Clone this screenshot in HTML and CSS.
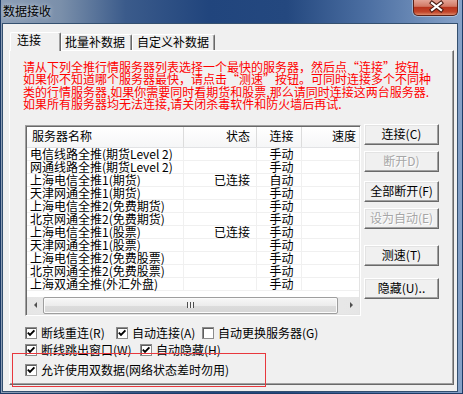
FILE: index.html
```html
<!DOCTYPE html>
<html lang="zh-CN">
<head>
  <meta charset="UTF-8">
  <meta name="viewport" content="width=device-width, initial-scale=1.0">
  <title>数据接收</title>
  <link rel="stylesheet" href="styles.css">
</head>
<body>
  <div class="window">
    <div class="titlebar">
      <span class="title">数据接收</span>
      <div class="close-btn">
        <svg width="45" height="15" viewBox="0 0 45 15">
          <path d="M18 3 L27 10 M27 3 L18 10" stroke="#4a1b12" stroke-width="4.2" stroke-linecap="square"/>
          <path d="M18 3 L27 10 M27 3 L18 10" stroke="#fff" stroke-width="2.2" stroke-linecap="square"/>
        </svg>
      </div>
    </div>

    <div class="client">
      <div class="tabs">
        <div class="tab active">连接</div>
        <div class="tab tab-batch">批量补数据</div>
        <div class="tab tab-custom">自定义补数据</div>
      </div>

      <div class="panel">
        <p class="notice">
          请从下列全推行情服务器列表选择一个最快的服务器，然后点“连接”按钮，<br>
          如果你不知道哪个服务器最快，请点击“测速”按钮。可同时连接多个不同种<br>
          类的行情服务器,如果你需要同时看期货和股票,那么请同时连接这两台服务器.<br>
          如果所有服务器均无法连接,请关闭杀毒软件和防火墙后再试.
        </p>

        <div class="main">
          <div class="listview">
            <div class="lv-head">
              <span class="col-name">服务器名称</span>
              <span class="col-state">状态</span>
              <span class="col-conn">连接</span>
              <span class="col-speed">速度</span>
            </div>
            <div class="lv-body" id="serverList"></div>
            <div class="lv-fill"></div>
            <div class="hscroll">
              <span class="sb-btn"><i class="arrow-left"></i></span>
              <span class="sb-thumb"><i class="grip"></i></span>
              <span class="sb-track"></span>
              <span class="sb-btn"><i class="arrow-right"></i></span>
            </div>
          </div>

          <div class="side-buttons">
            <button class="btn">连接(C)</button>
            <button class="btn disabled gap-6">断开D)</button>
            <button class="btn gap-9">全部断开(F)</button>
            <button class="btn disabled gap-6">设为自动(E)</button>
            <button class="btn gap-16">测速(T)</button>
            <button class="btn gap-12">隐藏(U)..</button>
          </div>
        </div>

        <div class="options">
          <div class="opt-row">
            <label class="opt opt-reconnect"><span class="cb checked"></span>断线重连(R)</label>
            <label class="opt opt-autoconn"><span class="cb checked"></span>自动连接(A)</label>
            <label class="opt"><span class="cb"></span>自动更换服务器(G)</label>
          </div>
          <div class="opt-row row-2">
            <label class="opt opt-popup"><span class="cb checked"></span>断线跳出窗口(W)</label>
            <label class="opt"><span class="cb checked"></span>自动隐藏(H)</label>
          </div>
          <div class="opt-row row-3">
            <label class="opt"><span class="cb checked"></span>允许使用双数据(网络状态差时勿用)</label>
          </div>
        </div>
      </div>

      <div class="highlight"></div>
    </div>
  </div>

  <script>
    const servers = [
      ['电信线路全推(期货Level 2)', '', '手动'],
      ['网通线路全推(期货Level 2)', '', '手动'],
      ['上海电信全推1(期货)', '已连接', '自动'],
      ['天津网通全推1(期货)', '', '手动'],
      ['上海电信全推2(免费期货)', '', '手动'],
      ['北京网通全推2(免费期货)', '', '手动'],
      ['上海电信全推1(股票)', '已连接', '手动'],
      ['天津网通全推1(股票)', '', '手动'],
      ['上海电信全推2(免费股票)', '', '手动'],
      ['北京网通全推2(免费股票)', '', '手动'],
      ['上海双通全推(外汇外盘)', '', '手动']
    ];

    const check = '<svg viewBox="0 0 10 10" width="10" height="10"><path d="M1.8 4.6 L4 6.9 L8.4 2.4" fill="none" stroke="#000" stroke-width="1.9"/></svg>';
    document.querySelectorAll('.cb.checked').forEach(cb => cb.innerHTML = check);

    document.getElementById('serverList').innerHTML = servers.map(s => `
      <div class="lv-row">
        <span class="col-name">${s[0]}</span>
        <span class="col-state">${s[1]}</span>
        <span class="col-conn">${s[2]}</span>
        <span class="col-speed"></span>
      </div>`).join('');
  </script>
</body>
</html>
```

FILE: styles.css
```css
* {
  box-sizing: border-box;
}
body {
  margin: 0;
  width: 463px;
  height: 394px;
  overflow: hidden;
  font-family: "SimSun", "Noto Sans CJK SC", sans-serif;
  font-size: 12px;
  color: #000;
}
.window {
  height: 394px;
  display: flex;
  flex-direction: column;
  padding: 0 4px 1px 1px;
  border: 1px solid #1d3b66;
  border-top: none;
  background: linear-gradient(90deg, #8d9fb7 0%, #7a8faa 13%, #3b5b8b 27%, #21457d 45%, #24487f 62%, #4d70a3 80%, #86a2c8 100%);
}
.titlebar {
  height: 23px;
  flex: none;
  display: flex;
  justify-content: space-between;
  align-items: flex-start;
}
.title {
  padding: 4px 0 0 1px;
  line-height: 14px;
  text-shadow: 0 0 5px rgba(255, 255, 255, 0.7);
}
.close-btn {
  width: 45px;
  height: 16px;
  border: 1px solid #5c2016;
  border-top: none;
  border-radius: 0 0 5px 5px;
  background: linear-gradient(#e3a496 0%, #d27965 42%, #b8341d 50%, #c2452a 80%, #dc8a6c 100%);
  box-shadow: 0 0 0 1px rgba(255, 255, 255, 0.35);
}
.close-btn svg {
  display: block;
}
.client {
  flex: 1;
  position: relative;
  border: 1px solid #34506f;
  background: #f0f0f0;
}

/* tabs */
.tabs {
  display: flex;
  align-items: flex-end;
  height: 18px;
  margin: 8px 0 0 7px;
}
.tab {
  height: 16px;
  line-height: 14px;
  border-top: 1px solid #fff;
  border-left: 1px solid #fff;
  border-right: 1px solid #696969;
  box-shadow: inset -1px 0 0 #a0a0a0;
  border-radius: 2px 2px 0 0;
  background: #f0f0f0;
  white-space: nowrap;
}
.tab.active {
  position: relative;
  z-index: 1;
  width: 51px;
  height: 19px;
  margin-bottom: -1px;
  padding-left: 6px;
}
.tab-batch {
  width: 71px;
  padding-left: 3px;
}
.tab-custom {
  width: 83px;
  padding-left: 4px;
}

/* panel */
.panel {
  width: 445px;
  height: 335px;
  margin-left: 6px;
  padding: 10px 0 0 13px;
  border: 1px solid;
  border-color: #fff #696969 #696969 #fff;
  box-shadow: inset -1px -1px 0 #a0a0a0;
}
.notice {
  margin: 0;
  color: #ff0000;
  line-height: 12.4px;
  white-space: nowrap;
}
.main {
  display: flex;
  align-items: flex-start;
  margin-top: 13px;
}

/* list */
.listview {
  display: flex;
  flex-direction: column;
  width: 336px;
  height: 191px;
  margin: 1px 0 0 2px;
  background: #fff;
  border: 1px solid;
  border-color: #a0a0a0 #fff #fff #a0a0a0;
  box-shadow: inset 1px 1px 0 #696969, inset -1px -1px 0 #e3e3e3;
  padding: 1px;
}
.lv-head, .lv-row {
  display: grid;
  grid-template-columns: 157px 73px 45px 1fr;
  white-space: nowrap;
}
.lv-head {
  height: 21px;
  line-height: 14px;
  background: linear-gradient(#fff, #f5f6f7);
  border-bottom: 1px solid #e2e3e5;
}
.lv-head span {
  padding-top: 2px;
  border-right: 1px solid #dcdcdc;
}
.lv-head span:last-child {
  border-right: none;
}
.lv-row {
  height: 13px;
  line-height: 12px;
  border-bottom: 1px solid #f0f0f0;
}
.lv-row span {
  border-right: 1px solid #f0f0f0;
}
.lv-row span:last-child {
  border-right: none;
}
.lv-head .col-name {
  padding-left: 5px;
}
.lv-row .col-name {
  padding-left: 3px;
}
.col-state {
  text-align: right;
  padding-right: 6px;
}
.col-conn {
  text-align: center;
  padding-left: 5px;
}
.col-speed {
  text-align: right;
  padding-right: 3px;
}
.lv-fill {
  flex: 1;
}
.hscroll {
  display: flex;
  height: 17px;
  background: linear-gradient(90deg, #e6e6e6, #f0f0f0 50%, #e6e6e6);
}
.sb-btn {
  width: 16px;
  display: flex;
  align-items: center;
  justify-content: center;
}
.arrow-left {
  border-right: 3px solid #505050;
  border-top: 3px solid transparent;
  border-bottom: 3px solid transparent;
}
.arrow-right {
  border-left: 3px solid #505050;
  border-top: 3px solid transparent;
  border-bottom: 3px solid transparent;
}
.sb-thumb {
  width: 295px;
  display: flex;
  align-items: center;
  justify-content: center;
  border: 1px solid #9e9e9e;
  border-radius: 2px;
  background: linear-gradient(#f7f7f7, #ececec 50%, #dcdcdc 51%, #d6d6d6);
  box-shadow: inset 0 0 0 1px #fbfbfb;
}
.grip {
  width: 7px;
  height: 6px;
  background: repeating-linear-gradient(90deg, #4f4f4f 0 1px, #f4f4f4 1px 3px);
}
.sb-track {
  flex: 1;
}

/* right buttons */
.side-buttons {
  display: flex;
  flex-direction: column;
  width: 75px;
  margin-left: 3px;
}
.btn {
  height: 21px;
  padding: 0;
  font: inherit;
  line-height: 14px;
  color: #000;
  background: #f0f0f0;
  border: 1px solid;
  border-color: #fff #696969 #696969 #fff;
  box-shadow: inset -1px -1px 0 #a0a0a0, inset 1px 1px 0 #e3e3e3;
  white-space: nowrap;
}
.btn.disabled {
  color: #a6a6a6;
  text-shadow: 1px 1px 0 #fff;
}
.gap-6 { margin-top: 6px; }
.gap-9 { margin-top: 9px; }
.gap-12 { margin-top: 12px; }
.gap-16 { margin-top: 16px; }

/* options */
.options {
  margin: 11px 0 0 2px;
}
.opt-row {
  display: flex;
  height: 12px;
}
.row-2 {
  margin-top: 5px;
}
.row-3 {
  margin-top: 8px;
}
.opt {
  display: flex;
  align-items: center;
  gap: 4px;
  line-height: 12px;
  white-space: nowrap;
}
.opt-reconnect { width: 91px; }
.opt-autoconn { width: 86px; }
.opt-popup { width: 115px; }
.cb {
  width: 12px;
  height: 12px;
  flex: none;
  border: 1px solid #8c8c8c;
  background: #fff;
  box-shadow: inset 1px 1px 0 #5e5e5e;
}
.cb svg {
  display: block;
}

/* annotation frame */
.highlight {
  position: absolute;
  left: 9px;
  top: 329px;
  width: 254px;
  height: 34px;
  border: 1px solid #e8383d;
}
```
